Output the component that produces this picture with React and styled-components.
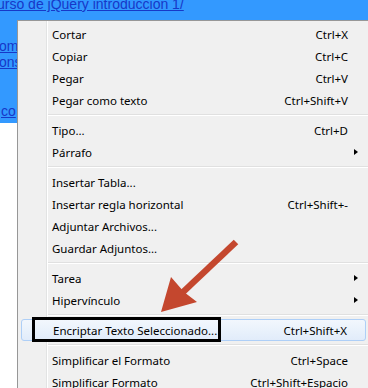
import React from "react";
import styled, { createGlobalStyle } from "styled-components";

const GlobalStyle = createGlobalStyle`
  html, body { margin: 0; padding: 0; background: #ffffff; }
  body { overflow: hidden; }
`;

const Page = styled.div`
  position: relative;
  width: 368px;
  height: 388px;
  overflow: hidden;
  display: grid;
  grid-template-rows: 20px 1fr;
  background: #ffffff;
  font-family: "Noto Sans", "Open Sans", sans-serif;
`;

const Header = styled.div`
  background: #3399ff;
  overflow: hidden;
  display: flex;
  align-items: flex-start;
`;

const LinkText = styled.span`
  display: block;
  flex: none;
  margin-left: ${(p) => p.$indent || 0}px;
  margin-top: ${(p) => p.$top || 0}px;
  font-family: "Liberation Sans", Arial, sans-serif;
  font-size: 14px;
  line-height: 13px;
  color: #1738c8;
  text-decoration: underline;
  white-space: nowrap;
`;

const Body = styled.div`
  display: flex;
  min-height: 0;
  overflow: hidden;
`;

const LeftStrip = styled.div`
  width: 17px;
  flex: none;
  display: flex;
  flex-direction: column;
`;

const BlueArea = styled.div`
  height: 103px;
  flex: none;
  background: #3399ff;
  overflow: hidden;
  display: flex;
  flex-direction: column;
  align-items: flex-start;
`;

const Menu = styled.div`
  flex: 1;
  border-left: 1px solid #979797;
  border-top: 1px solid #979797;
  padding-top: 2px;
  display: flex;
  flex-direction: column;
  background:
    linear-gradient(to right, transparent 28px, #e2e3e3 28px, #e2e3e3 29px, #ffffff 29px, #ffffff 30px, transparent 30px),
    #f0f0f0;
`;

const Item = styled.div`
  flex: none;
  height: 22px;
  box-sizing: border-box;
  display: flex;
  align-items: center;
  padding-left: ${(p) => (p.$active ? 31 : 34)}px;
  margin-left: ${(p) => (p.$active ? 3 : 0)}px;
  margin-right: ${(p) => (p.$active ? 2 : 0)}px;
  border: ${(p) => (p.$active ? "1px solid #aecff7" : "none")};
  border-radius: 3px;
  background: ${(p) =>
    p.$active ? "linear-gradient(to bottom, #f2f7fd, #e1ecfa)" : "transparent"};
  font-size: 11.5px;
  color: #000;
  white-space: nowrap;
`;

const Label = styled.span`
  flex: 1;
`;

const Shortcut = styled.span`
  flex: none;
`;

const ArrowSlot = styled.span`
  width: ${(p) => (p.$active ? 18 : 20)}px;
  flex: none;
  display: flex;
  align-items: center;
  padding-left: 6px;
  box-sizing: border-box;
`;

const SubArrow = styled.span`
  width: 0;
  height: 0;
  border-left: 4px solid #000;
  border-top: 3.5px solid transparent;
  border-bottom: 3.5px solid transparent;
`;

const Separator = styled.div`
  flex: none;
  height: 8px;
  box-sizing: border-box;
  display: flex;
  flex-direction: column;
  justify-content: center;
  padding-left: 30px;
  &::before {
    content: "";
    display: block;
    height: 1px;
    background: #e0e0e0;
  }
  &::after {
    content: "";
    display: block;
    height: 1px;
    background: #ffffff;
  }
`;

const Callout = styled.div`
  position: absolute;
  left: 32px;
  top: 317px;
  width: 189px;
  height: 25px;
  box-sizing: border-box;
  border: 3px solid #000;
  pointer-events: none;
`;

const ArrowSvg = styled.svg`
  position: absolute;
  left: 0;
  top: 0;
  pointer-events: none;
`;

const items = [
  { label: "Cortar", sc: "Ctrl+X" },
  { label: "Copiar", sc: "Ctrl+C" },
  { label: "Pegar", sc: "Ctrl+V" },
  { label: "Pegar como texto", sc: "Ctrl+Shift+V" },
  "sep",
  { label: "Tipo...", sc: "Ctrl+D" },
  { label: "Párrafo", sub: true },
  "sep",
  { label: "Insertar Tabla..." },
  { label: "Insertar regla horizontal", sc: "Ctrl+Shift+-" },
  { label: "Adjuntar Archivos..." },
  { label: "Guardar Adjuntos..." },
  "sep",
  { label: "Tarea", sub: true },
  { label: "Hipervínculo", sub: true },
  "sep",
  { label: "Encriptar Texto Seleccionado...", sc: "Ctrl+Shift+X", active: true },
  "sep",
  { label: "Simplificar el Formato", sc: "Ctrl+Space" },
  { label: "Simplificar Formato", sc: "Ctrl+Shift+Espacio" },
];

export default function App() {
  return (
    <>
      <GlobalStyle />
      <Page>
        <Header>
          <LinkText $indent={-3} $top={-2}>urso de jQuery introduccion 1/</LinkText>
        </Header>
        <Body>
          <LeftStrip>
            <BlueArea>
              <LinkText $indent={-1} $top={20}>om/</LinkText>
              <LinkText $indent={-1} $top={3}>ons</LinkText>
              <LinkText $indent={1} $top={36}>co</LinkText>
            </BlueArea>
          </LeftStrip>
          <Menu>
            {items.map((it, i) =>
              it === "sep" ? (
                <Separator key={i} />
              ) : (
                <Item key={i} $active={it.active}>
                  <Label>{it.label}</Label>
                  {it.sc && <Shortcut>{it.sc}</Shortcut>}
                  <ArrowSlot $active={it.active}>{it.sub && <SubArrow />}</ArrowSlot>
                </Item>
              )
            )}
          </Menu>
        </Body>
        <Callout />
        <ArrowSvg width="368" height="388" viewBox="0 0 368 388">
          <line x1="236" y1="242" x2="182" y2="293" stroke="#c4472e" strokeWidth="6.5" />
          <polygon points="161,312 171,277 184,292 197,302" fill="#c4472e" />
        </ArrowSvg>
      </Page>
    </>
  );
}
